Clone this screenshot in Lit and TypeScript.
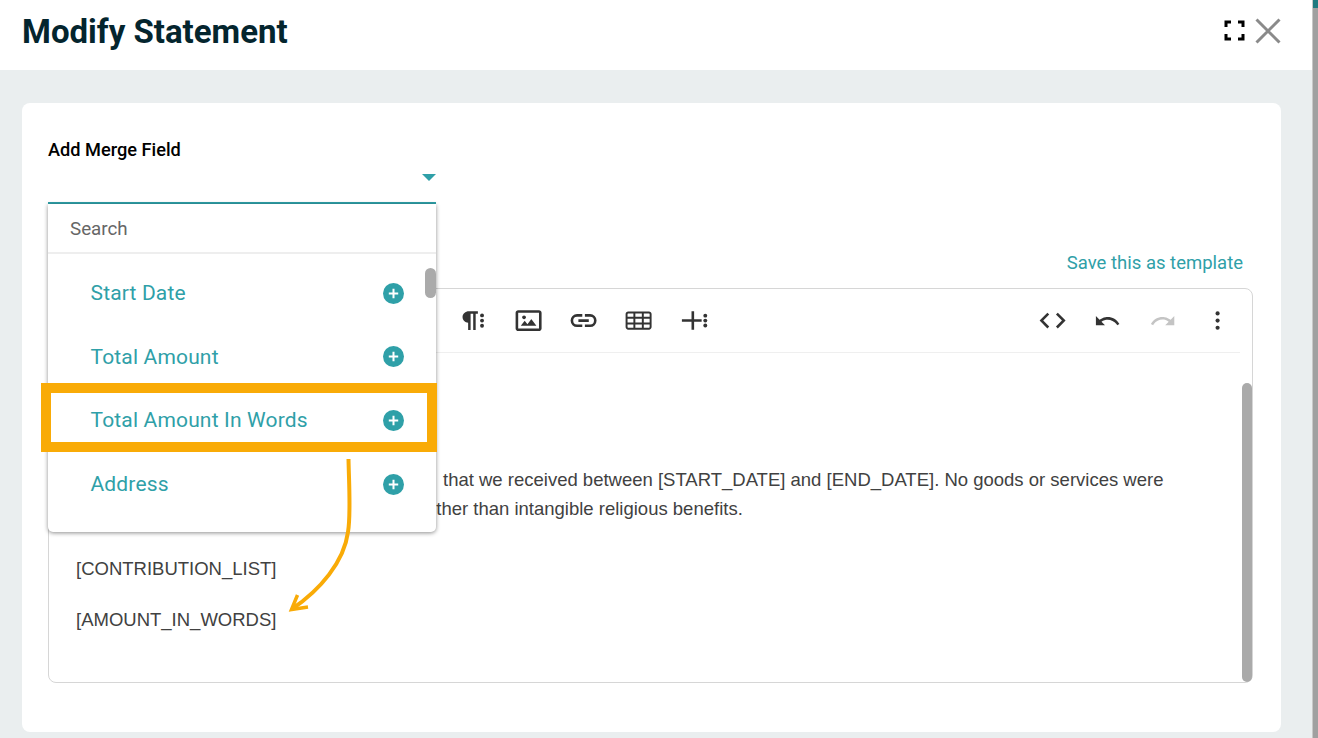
import { LitElement, html, css, svg } from "lit";
import { customElement } from "lit/decorators.js";

const icon = (paths: unknown, cls = "") => html`<svg class="tool ${cls}" viewBox="0 0 24 24">${paths}</svg>`;

const plus = html`<svg class="plus" viewBox="0 0 21 21"><circle cx="10.5" cy="10.5" r="10.5" fill="#2fa0a8"/><path d="M10.5 5.8v9.4M5.8 10.5h9.400" stroke="#fff" stroke-width="2"/></svg>`;

const left = [
  svg`<path d="M8.400 4.800C5.700 4.800 3.500 6.800 3.500 9.200c0 2.500 2.100 4.400 4.300 4.400V19.300h1.900V6.700h2V19.300h1.900V6.700h1.700V4.800z"/><circle cx="18.500" cy="8" r="1.500"/><circle cx="18.500" cy="12" r="1.500"/><circle cx="18.500" cy="16" r="1.500"/>`,
  svg`<path d="M14.2,11l3.8,5H6l3-3.9l2.1,2.7L14,11H14.2z M8.5,11c0.8,0,1.5-0.7,1.5-1.5S9.3,8,8.5,8S7,8.7,7,9.5C7,10.3,7.7,11,8.5,11z M22,6v12c0,1.1-0.9,2-2,2H4c-1.1,0-2-0.9-2-2V6c0-1.1,0.9-2,2-2h16C21.1,4,22,4.9,22,6z M20,8.8V6H4v12h16V8.8z"/>`,
  svg`<path d="M11,17H7A5,5,0,0,1,7,7h4V9H7a3,3,0,0,0,0,6h4ZM17,7H13V9h4a3,3,0,0,1,0,6H13v2h4A5,5,0,0,0,17,7Zm-1,4H8v2h8Z"/>`,
  svg`<path d="M20,5H4C2.9,5,2,5.9,2,7v2v1.5v3V15v2c0,1.1,0.9,2,2,2h16c1.1,0,2-0.9,2-2v-2v-1.5v-3V9V7C22,5.9,21.1,5,20,5z M9.5,13.5v-3 h5v3H9.5z M14.5,15v2.5h-5V15H14.5z M9.5,9V6.5h5V9H9.5z M3.5,7c0-0.3,0.2-0.5,0.5-0.5h4V9H3.5V7z M3.5,10.5H8v3H3.5V10.5z M3.5,17 v-2H8v2.5H4C3.7,17.5,3.5,17.3,3.5,17z M20.5,17c0,0.3-0.2,0.5-0.5,0.5h-4V15h4.5V17z M20.5,13.5H16v-3h4.5V13.5z M16,9V6.5h4 c0.3,0,0.5,0.2,0.5,0.5v2H16z"/>`,
  svg`<path d="M10.9 4.900h2v6.100h5.800v2h-5.800v6.100h-2v-6.100H3.500v-2h7.400z" transform="translate(-.500 -.100)"/><circle cx="21" cy="8.200" r="1.500"/><circle cx="21" cy="12" r="1.500"/><circle cx="21" cy="15.800" r="1.500"/>`,
];

const right = [
  svg`<path d="M9.4,16.6 L4.8,12 L9.4,7.4 L8,6 L2,12 L8,18 L9.4,16.6 Z M14.6,16.6 L19.2,12 L14.6,7.4 L16,6 L22,12 L16,18 L14.6,16.6 Z"/>`,
  svg`<path d="M10.4,9.4c-1.7,0.3-3.2,0.9-4.6,2L3,8.5v7h7l-2.7-2.7c3.7-2.6,8.8-1.8,11.5,1.9c0.2,0.3,0.4,0.5,0.5,0.8l1.8-0.9 C18.9,10.8,14.7,8.7,10.4,9.4z"/>`,
  svg`<path fill="#c4c4c4" d="M13.6,9.4c1.7,0.3,3.2,0.9,4.6,2L21,8.5v7h-7l2.7-2.7C13,10.1,7.9,11,5.3,14.7c-0.2,0.3-0.4,0.5-0.5,0.8L3,14.6 C5.1,10.8,9.3,8.7,13.6,9.4z"/>`,
  svg`<circle cx="12" cy="6.500" r="1.600"/><circle cx="12" cy="12" r="1.600"/><circle cx="12" cy="17.500" r="1.600"/>`,
];

@customElement("app-root")
export class AppRoot extends LitElement {
  static styles = css`
    :host { display: flex; position: relative; height: 738px; width: 1318px; overflow: hidden; background: #fff; font-family: Roboto, sans-serif; }
    .page { width: 1312px; display: flex; flex-direction: column; }
    .head { height: 70px; flex: none; display: flex; align-items: center; justify-content: space-between; padding: 0 31px 0 22px; box-sizing: border-box; background: #fff; }
    h1 { margin: 0 0 6px; font-size: 33px; font-weight: 700; color: #04252e; line-height: 62px; height: 62px; }
    .head-icons { display: flex; align-items: center; gap: 10px; margin-top: -9px; }
    .fs { width: 21px; height: 21px; }
    .x { width: 26px; height: 26px; }
    .main { flex: 1; background: #eaeeef; padding: 33px 31px 6px 22px; display: flex; min-height: 0; }
    .card { flex: 1; background: #fff; border-radius: 8px; padding: 36px 28px 49px 26px; display: flex; flex-direction: column; box-sizing: border-box; }
    .label { font-size: 18.200px; font-weight: 500; line-height: 22px; color: #000; }
    .field { position: relative; width: 388px; height: 43px; box-sizing: border-box; border-bottom: 2px solid #2fa0a8; flex: none; }
    .caret { position: absolute; right: 0; top: 13px; width: 0; height: 0; border-left: 7px solid transparent; border-right: 7px solid transparent; border-top: 7px solid #2fa0a8; }
    .menu { position: absolute; left: 0; top: 43px; width: 388px; height: 328px; background: #fff; border-radius: 0 0 5px 5px; box-shadow: 0 1px 4px rgba(0,0,0,.45); display: flex; flex-direction: column; z-index: 2; overflow: hidden; }
    .search { height: 50px; flex: none; display: flex; align-items: center; padding: 1px 0 0 22px; box-sizing: border-box; font-size: 18.800px; color: #666; border-bottom: 2px solid #eee; }
    .menu-body { display: flex; flex: 1; min-height: 0; }
    .list { flex: 1; padding-top: 8px; }
    .item { height: 63.600px; display: flex; align-items: center; justify-content: space-between; padding: 0 21px 1px 42.500px; box-sizing: border-box; font-size: 21px; color: #2fa0a8; letter-spacing: .16px; }
    .plus { width: 21px; height: 21px; display: block; }
    .menu-track { width: 11px; padding-top: 14px; flex: none; }
    .menu-thumb { height: 30px; border-radius: 6px; background: #aaa; }
    .save-row { display: flex; justify-content: flex-end; margin-top: 47px; padding-right: 10px; font-size: 18.500px; line-height: 24px; color: #2fa0a8; flex: none; }
    .editor { margin-top: 13px; flex: 1; min-height: 0; border: 1px solid #d6d6d6; border-radius: 8px; display: flex; box-sizing: border-box; }
    .col { flex: 1; min-width: 0; display: flex; flex-direction: column; }
    .toolbar { height: 64px; flex: none; display: flex; align-items: center; justify-content: space-between; padding: 0 7px 0 409px; border-bottom: 1px solid #efefef; box-sizing: border-box; }
    .group { display: flex; gap: 23.800px; }
    .tool { width: 31.200px; height: 31.200px; fill: #333; display: block; }
    .content { flex: 1; padding: 112px 0 0 27px; font-family: "Liberation Sans", Arial, sans-serif; font-size: 18.500px; line-height: 29px; color: #414141; }
    .content p { margin: 0; white-space: nowrap; }
    .l1 { padding-left: 367px; }
    .l2 { padding-left: 350px; }
    .p2 { margin-top: 31px !important; }
    .p3 { margin-top: 22px !important; }
    .track { width: 12px; flex: none; padding: 94px 0 0 2px; box-sizing: border-box; display: flex; }
    .thumb { flex: 1; background: #aaa; border-radius: 6px; }
    .bar { width: 6px; flex: none; background: #a0a0a0; border-left: 1px solid #c8c8c8; box-sizing: border-box; }
    .bar-top { height: 8px; background: #1f7a80; }
    .hl { position: absolute; left: 41px; top: 383px; width: 396px; height: 69px; box-sizing: border-box; border: 10px solid #f9ab07; z-index: 3; }
    .arrow { position: absolute; left: 0; top: 0; width: 1318px; height: 738px; z-index: 3; pointer-events: none; }
  `;

  render() {
    const items = ["Start Date", "Total Amount", "Total Amount In Words", "Address"];
    return html`
      <div class="page">
        <header class="head">
          <h1>Modify Statement</h1>
          <div class="head-icons">
            <svg class="fs" viewBox="0 0 21 21" fill="none" stroke="#000" stroke-width="3"><path d="M2 7V2h5M14 2h5v5M19 14v5h-5M7 19H2v-5"/></svg>
            <svg class="x" viewBox="0 0 26 26" fill="none" stroke="#8a8a8a" stroke-width="3"><path d="M1.500 1.500l23 23M24.500 1.500l-23 23"/></svg>
          </div>
        </header>
        <main class="main">
          <section class="card">
            <div class="label">Add Merge Field</div>
            <div class="field">
              <span class="caret"></span>
              <div class="menu">
                <div class="search">Search</div>
                <div class="menu-body">
                  <div class="list">
                    ${items.map((t) => html`<div class="item"><span>${t}</span>${plus}</div>`)}
                  </div>
                  <div class="menu-track"><div class="menu-thumb"></div></div>
                </div>
              </div>
            </div>
            <div class="save-row">Save this as template</div>
            <div class="editor">
              <div class="col">
                <div class="toolbar">
                  <div class="group">${left.map((p) => icon(p))}</div>
                  <div class="group">${right.map((p) => icon(p))}</div>
                </div>
                <div class="content">
                  <p class="l1">that we received between [START_DATE] and [END_DATE]. No goods or services were</p>
                  <p class="l2">other than intangible religious benefits.</p>
                  <p class="p2">[CONTRIBUTION_LIST]</p>
                  <p class="p3">[AMOUNT_IN_WORDS]</p>
                </div>
              </div>
              <div class="track"><div class="thumb"></div></div>
            </div>
          </section>
        </main>
      </div>
      <div class="bar"><div class="bar-top"></div></div>
      <div class="hl"></div>
      <svg class="arrow" viewBox="0 0 1318 738" fill="none" stroke="#f9ab07" stroke-width="4">
        <path d="M348.500 459C349 485 351 515 348 532C344 562 320 590 292 609"/>
        <path d="M297.500 595L291.500 609.500L308 607" stroke-width="3.500"/>
      </svg>
    `;
  }
}
